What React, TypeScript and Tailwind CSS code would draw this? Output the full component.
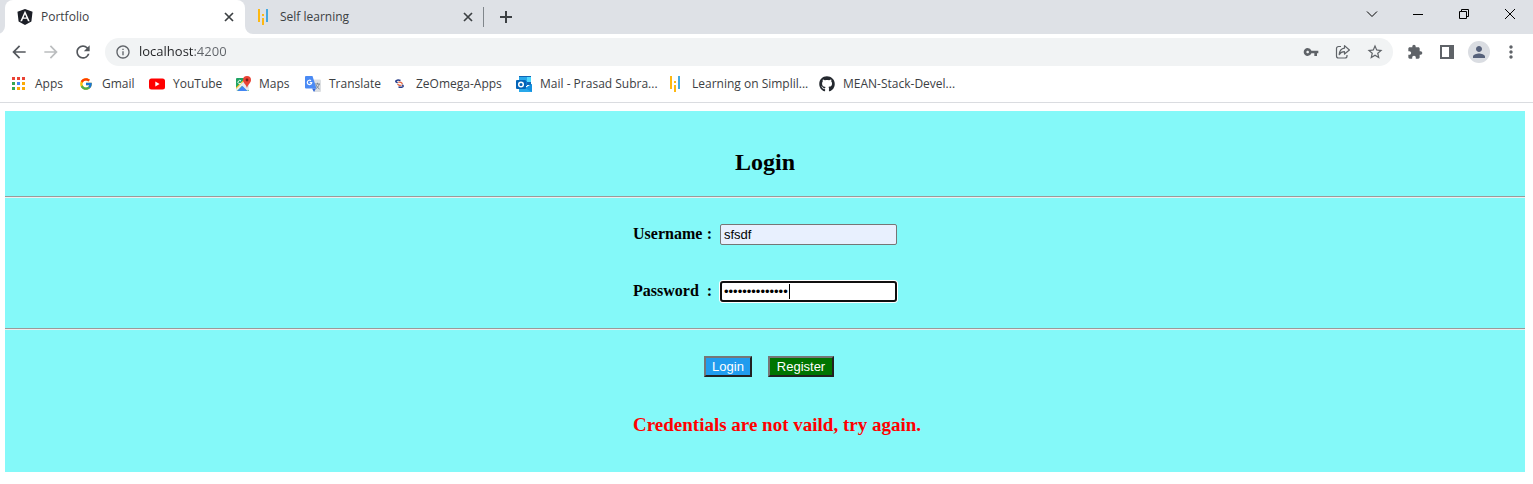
import { useState } from "react";
import type { ReactNode } from "react";
import { MdArrowBack, MdArrowForward, MdRefresh, MdInfoOutline, MdVpnKey, MdStarBorder, MdExtension, MdPerson, MdMoreVert } from "react-icons/md";
import { FcGoogle } from "react-icons/fc";
import { FaGithub } from "react-icons/fa";

function AngularIcon() {
  return (
    <svg viewBox="0 0 24 24" className="size-4" aria-hidden="true">
      <path fill="#1b1e26" d="M9.931 12.645h4.138l-2.07-4.908m0-7.737L.68 3.982l1.726 14.771L12 24l9.596-5.247L23.32 3.982 11.999.001zm7.064 18.31h-2.638l-1.422-3.503H8.996l-1.422 3.504h-2.64L12 2.65z" />
    </svg>
  );
}

function SimplilearnIcon() {
  return (
    <svg viewBox="0 0 16 16" className="size-4" aria-hidden="true">
      <path fill="#fdb813" d="M2 0h2v13H2zM6 5h2v2H6zM6 9h2v7H6z" />
      <path fill="#45a9e0" d="M10 0h2v13h-2z" />
    </svg>
  );
}

function AppsIcon() {
  return (
    <svg viewBox="0 0 16 16" className="size-4" aria-hidden="true">
      <path fill="#ea4335" d="M1 1h3v3H1zM6 1h3v3H6zM11 1h3v3h-3z" />
      <path fill="#34a853" d="M1 6h3v3H1zM1 11h3v3H1z" />
      <path fill="#4285f4" d="M6 6h3v3H6z" />
      <path fill="#fbaa05" d="M11 6h3v3h-3zM6 11h3v3H6zM11 11h3v3h-3z" />
    </svg>
  );
}

function YouTubeIcon() {
  return (
    <svg viewBox="0 0 16 16" className="size-4" aria-hidden="true">
      <rect y="2.5" width="16" height="11" rx="2.5" fill="#f00" />
      <path fill="#fff" d="M6.3 5.6 10.6 8l-4.3 2.4z" />
    </svg>
  );
}

function MapsIcon() {
  return (
    <svg viewBox="0 0 16 16" className="size-4" aria-hidden="true">
      <rect x="1" y="2" width="13" height="13" rx="1" fill="#1fa463" />
      <path fill="#e8eaed" d="m1 12 9-9 4 4v7l-2 1-5-5-5 5H1z" />
      <path fill="#4285f4" d="m2.500 15 5-5 5 5z" />
      <path fill="#fbc116" d="m1 11.500 8.500-8.500.8.800L1 13z" />
      <path fill="none" stroke="#fff" d="M6 5a1.700 1.700 0 1 0 .3 1.800" />
      <path fill="#ea4335" d="M12 0a4 4 0 0 0-4 4c0 3 3 4 4 8 1-4 4-5 4-8a4 4 0 0 0-4-4" />
      <circle cx="12" cy="4" r="1.400" fill="#7b1d16" />
    </svg>
  );
}

function TranslateIcon() {
  return (
    <svg viewBox="0 0 16 16" className="size-4" aria-hidden="true">
      <path fill="#dcdfe2" d="M6 3.500h9a1 1 0 0 1 1 1V15a1 1 0 0 1-1 1H9z" />
      <path fill="#3367d6" d="M7 12.500h4L9 16z" />
      <path fill="#4a8af4" d="M1 0h6.500l4 12.500H1a1 1 0 0 1-1-1V1a1 1 0 0 1 1-1" />
      <path fill="none" stroke="#fff" strokeWidth="1.200" d="M6 4.800A2.200 2.200 0 1 0 6.700 6.700H4.700" />
      <path fill="none" stroke="#7b8794" d="M10 8h5M12.500 6.800V8M14.200 8c-.4 2-1.700 3.500-3 4.500M11 9c.7 1.800 2 3 3.500 4" />
    </svg>
  );
}

function ZeOmegaIcon() {
  return (
    <svg viewBox="0 0 16 16" className="size-4" aria-hidden="true">
      <path fill="none" stroke="#273c88" strokeWidth="1.500" d="M8.500 4.500C6 3.700 3.700 4.200 3.700 5.300c0 .8 1 1.200 2 1.500M6.500 11.100c2.500.5 4.600.1 4.700-.9 0-.6-.4-1-1-1.300" />
      <path fill="none" stroke="#e0633f" strokeWidth="1.300" d="M6.300 6.400c1.700-.6 3.900.2 4 1.700M5.600 8c.6 1.300 2.500 1.700 4 1" />
    </svg>
  );
}

function OutlookIcon() {
  return (
    <svg viewBox="0 0 16 16" className="size-4" aria-hidden="true">
      <path fill="#1066b5" d="M3 0h12v9H3z" />
      <path fill="#28a8ea" d="M3 1h4v4H3zM7 1h4v4H7z" />
      <path fill="#50d9ff" d="M11 1h4v5h-4z" />
      <path fill="#0f78d4" d="M7 5h4v5H7z" />
      <path fill="#28a8ea" d="M16 8v8H3v-5l7 1z" />
      <path fill="#1490df" d="m9 12 7 4V8z" />
      <rect y="4" width="10" height="9" rx="1" fill="#0364b8" />
      <circle cx="5" cy="8.500" r="2.300" fill="none" stroke="#fff" strokeWidth="1.500" />
    </svg>
  );
}

function ShareIcon() {
  return (
    <svg viewBox="0 0 16 16" className="size-4" fill="none" stroke="#5f6368" strokeWidth="1.200" strokeLinejoin="round" aria-hidden="true">
      <path d="M6 2.500H3.500a2 2 0 0 0-2 2V12a2 2 0 0 0 2 2H10a2 2 0 0 0 2-2v-1" />
      <path d="M9.500 1.600 14.400 6 9.500 10V7.700C7 7.700 5.300 8.600 4.200 10.600 4.500 7 6.500 4.500 9.500 4.100z" />
    </svg>
  );
}

function CrossIcon() {
  return (
    <svg viewBox="0 0 16 16" className="size-4" fill="none" stroke="#3c4043" strokeWidth="1.700" aria-hidden="true">
      <path d="m4 4 8 8M12 4l-8 8" />
    </svg>
  );
}

type IconButtonProps = { label: string; children: ReactNode };

function IconButton({ label, children }: IconButtonProps) {
  return (
    <button type="button" aria-label={label} className="flex size-8 items-center justify-center">
      {children}
    </button>
  );
}

type WindowGlyph = { label: string; path: string };

const windowGlyphs: WindowGlyph[] = [
  { label: "Search tabs", path: "m3 5.500 5 5 5-5" },
  { label: "Minimize", path: "M3 8.500h10" },
  { label: "Restore", path: "M3.500 5.500h7v7h-7zM5.500 5.500v-2h7v7h-2" },
  { label: "Close window", path: "m3 3 10 10M13 3 3 13" },
];

type Bookmark = { label: string; icon: ReactNode; width: string };

const bookmarks: Bookmark[] = [
  { label: "Apps", icon: <AppsIcon />, width: "w-[67px]" },
  { label: "Gmail", icon: <FcGoogle className="size-4 p-px" />, width: "w-[71px]" },
  { label: "YouTube", icon: <YouTubeIcon />, width: "w-[86px]" },
  { label: "Maps", icon: <MapsIcon />, width: "w-[70px]" },
  { label: "Translate", icon: <TranslateIcon />, width: "w-[87px]" },
  { label: "ZeOmega-Apps", icon: <ZeOmegaIcon />, width: "w-[124px]" },
  { label: "Mail - Prasad Subra...", icon: <OutlookIcon />, width: "w-[152px]" },
  { label: "Learning on Simplil...", icon: <SimplilearnIcon />, width: "w-[151px]" },
  { label: "MEAN-Stack-Devel...", icon: <FaGithub className="size-4 text-[#24292f]" />, width: "w-[151px]" },
];

function TabStrip() {
  return (
    <div className="flex h-[34px] items-center bg-[#dee1e6] pl-[5px]">
      <div className="relative flex h-full w-60 items-center rounded-t-lg bg-white pr-2 pl-3">
        <button type="button" className="flex flex-1 items-center gap-2">
          <AngularIcon />
          <span>Portfolio</span>
        </button>
        <button type="button" aria-label="Close Portfolio"><CrossIcon /></button>
        <svg viewBox="0 0 8 8" className="absolute bottom-0 -left-2 size-2" aria-hidden="true"><path fill="#fff" d="M8 0v8H0a8 8 0 0 0 8-8" /></svg>
        <svg viewBox="0 0 8 8" className="absolute -right-2 bottom-0 size-2" aria-hidden="true"><path fill="#fff" d="M0 0v8h8a8 8 0 0 1-8-8" /></svg>
      </div>
      <div className="flex h-5 w-[239px] items-center border-r border-[#80868b] pr-[7px] pl-[11px]">
        <button type="button" className="flex flex-1 items-center gap-2">
          <SimplilearnIcon />
          <span>Self learning</span>
        </button>
        <button type="button" aria-label="Close Self learning"><CrossIcon /></button>
      </div>
      <button type="button" aria-label="New tab" className="ml-3.5">
        <svg viewBox="0 0 16 16" className="size-4" fill="none" stroke="#3c4043" strokeWidth="2" aria-hidden="true"><path d="M8 2v12M2 8h12" /></svg>
      </button>
      <div className="mr-[15px] mb-1.5 ml-auto flex gap-[30px]">
        {windowGlyphs.map((glyph) => (
          <button key={glyph.label} type="button" aria-label={glyph.label}>
            <svg viewBox="0 0 16 16" className="size-4" fill="none" stroke="#000" aria-hidden="true"><path d={glyph.path} /></svg>
          </button>
        ))}
      </div>
    </div>
  );
}

function Toolbar() {
  return (
    <div className="flex h-9 items-center pr-1.5 pl-[3px] text-[#5f6368]">
      <div className="mr-1.5 flex">
        <IconButton label="Back"><MdArrowBack className="size-5 text-[#54585d]" /></IconButton>
        <IconButton label="Forward"><MdArrowForward className="size-5 text-[#bbbdbf]" /></IconButton>
        <IconButton label="Reload"><MdRefresh className="size-5 text-[#54585d]" /></IconButton>
      </div>
      <div className="flex h-7 flex-1 items-center rounded-full bg-[#f1f3f4] pr-0.5 pl-2.5">
        <MdInfoOutline className="size-4" aria-hidden="true" />
        <input
          type="text"
          aria-label="Address"
          defaultValue="localhost:4200"
          className="ml-2 min-w-0 flex-1 bg-[linear-gradient(90deg,#202124_54px,#5f6368_54px)] bg-clip-text text-[13px] text-transparent outline-none"
        />
        <div className="flex">
          <IconButton label="Saved passwords"><MdVpnKey className="size-4" /></IconButton>
          <IconButton label="Share"><ShareIcon /></IconButton>
          <IconButton label="Bookmark this page"><MdStarBorder className="size-[18px]" /></IconButton>
        </div>
      </div>
      <div className="ml-1.5 flex">
        <IconButton label="Extensions"><MdExtension className="size-4" /></IconButton>
        <IconButton label="Side panel">
          <svg viewBox="0 0 16 16" className="size-4" aria-hidden="true"><path fill="#5f6368" fillRule="evenodd" d="M1 1h14v14H1zM3 3v10h7V3z" /></svg>
        </IconButton>
        <IconButton label="Profile">
          <span className="rounded-full bg-[#dadde2] p-0.5"><MdPerson className="size-[18px] text-[#56617a]" /></span>
        </IconButton>
        <IconButton label="Menu"><MdMoreVert className="size-5" /></IconButton>
      </div>
    </div>
  );
}

function BookmarkBar() {
  return (
    <nav aria-label="Bookmarks" className="flex h-[33px] items-center border-b border-[#dadce0] pb-1 pl-[11px]">
      {bookmarks.map((bookmark) => (
        <a key={bookmark.label} href="#" className={`flex shrink-0 items-center gap-2 whitespace-nowrap ${bookmark.width}`}>
          <span className="shrink-0">{bookmark.icon}</span>
          <span>{bookmark.label}</span>
        </a>
      ))}
    </nav>
  );
}

function Divider() {
  return <hr className="h-0.5 border-0 border-t border-[#9a9a9a] bg-[#eeeeee]" />;
}

function LoginPage() {
  const [username, setUsername] = useState("sfsdf");
  const [password, setPassword] = useState("abcdefghijklmn");
  return (
    <main className="mt-2 mr-2 ml-[5px] bg-[#84f9f9] pt-[37px] pb-9 font-['Liberation_Serif',serif] text-base text-black">
      <h1 className="mb-5 text-center text-2xl leading-7 font-bold">Login</h1>
      <form onSubmit={(event) => event.preventDefault()}>
        <Divider />
        <div className="flex flex-col items-center gap-9 py-[26px]">
          <div className="flex items-start gap-2">
            <label htmlFor="username" className="flex w-[79px] justify-between leading-5 font-bold">
              <span>Username</span>
              <span>:</span>
            </label>
            <input
              id="username"
              type="text"
              value={username}
              onChange={(event) => setUsername(event.target.value)}
              className="h-[21px] w-[177px] rounded-xs border border-[#767676] bg-[#e8f0fe] px-[3px] font-['Liberation_Sans',sans-serif] text-[13px] outline-none"
            />
          </div>
          <div className="flex items-start gap-2">
            <label htmlFor="password" className="flex w-[79px] justify-between leading-5 font-bold">
              <span>Password</span>
              <span>:</span>
            </label>
            <div className="relative flex">
              <input
                id="password"
                type="password"
                value={password}
                onChange={(event) => setPassword(event.target.value)}
                className="h-[21px] w-[177px] rounded-[3px] border-2 border-[#101010] bg-white px-0.5 font-['Liberation_Sans',sans-serif] text-[13px] ring-1 ring-white outline-none"
              />
              <span className="absolute top-[3px] left-[69px] h-[15px] w-px bg-black" aria-hidden="true" />
            </div>
          </div>
        </div>
        <Divider />
        <div className="flex justify-center gap-4 pt-[26px] pl-2 font-['Liberation_Sans',sans-serif] text-[13px] leading-4 text-white">
          <button type="submit" className="h-[21px] w-12 border-2 border-t-[#767676] border-r-[#212121] border-b-[#212121] border-l-[#767676] bg-[#209cee]">Login</button>
          <button type="button" className="h-[21px] w-[66px] border-2 border-t-[#767676] border-r-[#212121] border-b-[#212121] border-l-[#767676] bg-[#007500]">Register</button>
        </div>
      </form>
      <p role="alert" className="mt-[37px] pl-6 text-center text-[19px] leading-[22px] font-bold text-[#ff0000]">Credentials are not vaild, try again.</p>
    </main>
  );
}

export default function App() {
  return (
    <div className="bg-white font-['Open_Sans',sans-serif] text-xs text-[#3c4043]">
      <header>
        <TabStrip />
        <Toolbar />
        <BookmarkBar />
      </header>
      <LoginPage />
    </div>
  );
}
